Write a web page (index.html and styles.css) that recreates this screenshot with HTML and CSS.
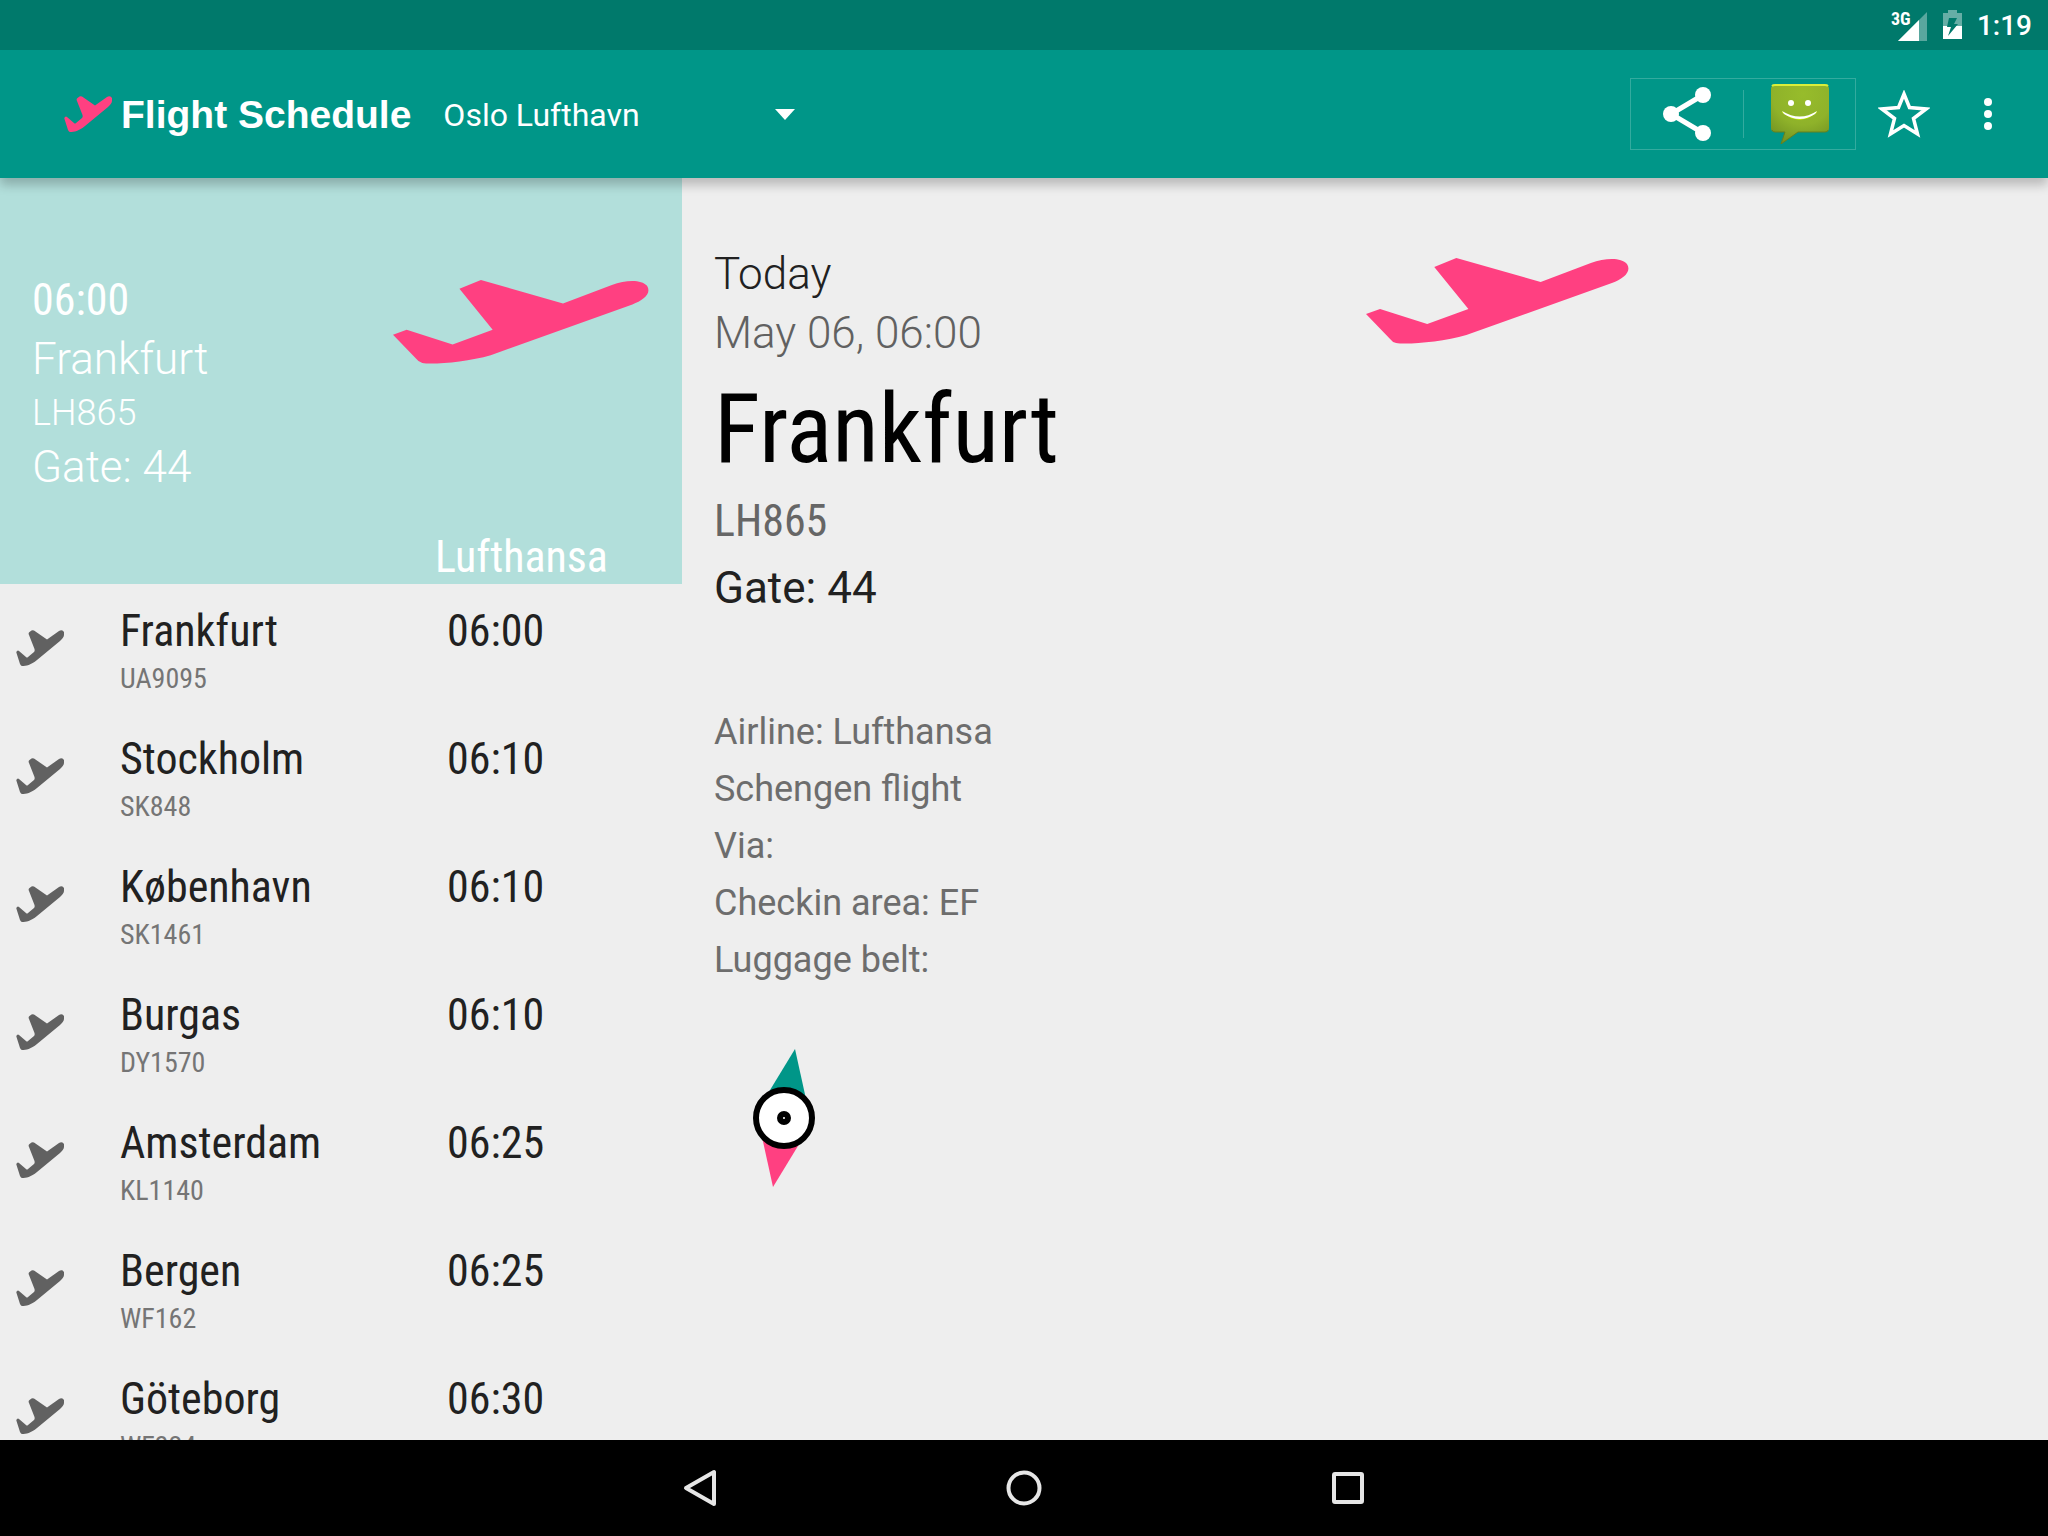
FILE: index.html
```html
<!DOCTYPE html>
<html lang="en">
<head>
<meta charset="utf-8">
<title>Flight Schedule</title>
<link rel="stylesheet" href="styles.css">
</head>
<body>
<svg width="0" height="0" class="defs" aria-hidden="true">
  <symbol id="plane" viewBox="0 0 262 86" preserveAspectRatio="none">
    <path d="M0 56 L14 51 L61 66 L102 51 L68 9 L90 0 L174 24 L224 5 C238 0 254 -1 260 6 C265 14 256 21 245 25 L100 77 C76 84 40 87 30 85 Q26 84 24 81 Z"/>
  </symbol>
  <symbol id="plane-small" viewBox="0 0 48 36">
    <path d="M1 21 Q2 20 3 21 L10 27 Q11 28 12 27 L18 22 Q19 21 18.500 19 L13 5 Q12 3 13.500 2 L15.500 .500 Q16.500 0 18 .500 L31 9.500 L43 1 C46 -1 49 1 48 5 C48 7 46 9 44 11 L21 30 C15 35 10 36 6 36 Q5 36 4 34 L.500 23 Q0 22 1 21 Z"/>
  </symbol>
</svg>

<header class="top">
  <div class="status">
    <svg class="signal" width="36" height="32" viewBox="0 0 36 32" role="img" aria-label="3G signal">
      <path d="M36 3 V32 H7 Z" fill="#fff" opacity=".35"/>
      <path d="M28 11 V32 H7 Z" fill="#fff"/>
      <text x="0" y="16" class="net">3G</text>
    </svg>
    <svg class="battery" width="20" height="30" viewBox="0 0 20 30" role="img" aria-label="Battery charging">
      <path d="M0 3 H5 V0 H14 V3 H19 V16 H0 Z" fill="#fff" opacity=".4"/>
      <path d="M0 16 H19 V29 H0 Z" fill="#fff"/>
      <path d="M6 8 H14 L11 14 H15 L5 26 L8 17 H4 Z" fill="#00796b"/>
    </svg>
    <time class="clock">1:19</time>
  </div>
  <div class="toolbar">
    <svg class="logo" width="48" height="36"><use href="#plane-small"/></svg>
    <h1 class="title">Flight Schedule</h1>
    <div class="airport">
      <select class="airport-select" aria-label="Airport">
        <option>Oslo Lufthavn</option>
      </select>
      <svg class="caret" width="20" height="11" viewBox="0 0 20 11"><path d="M0 0 H20 L10 11 Z" fill="#fff"/></svg>
    </div>
    <div class="actions">
      <div class="share-group">
        <button class="share-button" type="button" aria-label="Share">
          <svg width="48" height="54" viewBox="0 0 48 54" fill="#fff">
            <path d="M40 8 L8 27 L40 46" fill="none" stroke="#fff" stroke-width="5"/>
            <circle cx="40" cy="8" r="8"/><circle cx="8" cy="27" r="8"/><circle cx="40" cy="46" r="8"/>
          </svg>
        </button>
        <button class="share-button" type="button" aria-label="Messaging">
          <svg width="58" height="60" viewBox="0 0 58 60">
            <defs>
              <radialGradient id="bubble" cx=".55" cy=".15" r=".95">
                <stop offset="0" stop-color="#97bc2b"/><stop offset=".55" stop-color="#8fb22a"/><stop offset="1" stop-color="#6c8c20"/>
              </radialGradient>
            </defs>
            <path d="M4 1 H54 Q58 1 58 5 V44 Q58 48 54 48 H27 L10 60 L14 48 H4 Q0 48 0 44 V5 Q0 1 4 1 Z" fill="url(#bubble)"/>
            <path d="M1 2 Q2 1 4 1 H54 Q56 1 57 2" fill="none" stroke="#d9ee3a" stroke-width="2"/>
            <path d="M1 46 Q2 48 4 48 H14 L10 60 L27 48 H54 Q57 48 57 46" fill="none" stroke="#64801f"/>
            <circle cx="20" cy="19" r="3" fill="#fff"/><circle cx="37" cy="19" r="3" fill="#fff"/>
            <path d="M11 28 Q29 43 46 28" fill="none" stroke="#c4f000" stroke-width="1"/>
            <path d="M11 27 Q29 38 46 27 Q45 29 44 30 Q29 40 13 30 Z" fill="#fff"/>
          </svg>
        </button>
      </div>
      <button class="icon-button star" type="button" aria-label="Favourite">
        <svg width="52" height="48" viewBox="0 0 52 48">
          <path d="M26 4 L31.500 17.500 L48 19 L35.500 28.500 L39.500 44 L26 35.500 L12.500 44 L16.500 28.500 L4 19 L20.500 17.500 Z" fill="none" stroke="#fff" stroke-width="3.500"/>
        </svg>
      </button>
      <button class="icon-button more" type="button" aria-label="More options">
        <svg width="8" height="32" viewBox="0 0 8 32" fill="#fff"><circle cx="4" cy="4" r="4"/><circle cx="4" cy="16" r="4"/><circle cx="4" cy="28" r="4"/></svg>
      </button>
    </div>
  </div>
</header>

<main class="content">
  <section class="schedule">
    <div class="next">
      <div class="next-text">
        <p class="next-time">06:00</p>
        <p class="next-city">Frankfurt</p>
        <p class="next-code">LH865</p>
        <p class="next-gate">Gate: 44</p>
      </div>
      <svg class="next-plane" width="256" height="84"><use href="#plane"/></svg>
      <p class="next-airline">Lufthansa</p>
    </div>
    <ul class="flights">
      <li class="flight"><svg class="flight-icon" width="48" height="36"><use href="#plane-small"/></svg><div class="flight-name"><p class="city">Frankfurt</p><p class="code">UA9095</p></div><time class="flight-time">06:00</time></li>
      <li class="flight"><svg class="flight-icon" width="48" height="36"><use href="#plane-small"/></svg><div class="flight-name"><p class="city">Stockholm</p><p class="code">SK848</p></div><time class="flight-time">06:10</time></li>
      <li class="flight"><svg class="flight-icon" width="48" height="36"><use href="#plane-small"/></svg><div class="flight-name"><p class="city">København</p><p class="code">SK1461</p></div><time class="flight-time">06:10</time></li>
      <li class="flight"><svg class="flight-icon" width="48" height="36"><use href="#plane-small"/></svg><div class="flight-name"><p class="city">Burgas</p><p class="code">DY1570</p></div><time class="flight-time">06:10</time></li>
      <li class="flight"><svg class="flight-icon" width="48" height="36"><use href="#plane-small"/></svg><div class="flight-name"><p class="city">Amsterdam</p><p class="code">KL1140</p></div><time class="flight-time">06:25</time></li>
      <li class="flight"><svg class="flight-icon" width="48" height="36"><use href="#plane-small"/></svg><div class="flight-name"><p class="city">Bergen</p><p class="code">WF162</p></div><time class="flight-time">06:25</time></li>
      <li class="flight"><svg class="flight-icon" width="48" height="36"><use href="#plane-small"/></svg><div class="flight-name"><p class="city">Göteborg</p><p class="code">WF324</p></div><time class="flight-time">06:30</time></li>
    </ul>
  </section>

  <section class="detail">
    <div class="detail-text">
      <p class="day">Today</p>
      <p class="date">May 06, 06:00</p>
      <h2 class="destination">Frankfurt</h2>
      <p class="detail-code">LH865</p>
      <p class="detail-gate">Gate: 44</p>
      <div class="facts">
        <p>Airline: Lufthansa</p>
        <p>Schengen flight</p>
        <p>Via:</p>
        <p>Checkin area: EF</p>
        <p>Luggage belt:</p>
      </div>
      <svg class="compass" width="62" height="138" viewBox="0 0 62 138" role="img" aria-label="Compass">
        <path d="M42 0 L53 50 L14 46 Z" fill="#009688"/>
        <path d="M20 138 L9 88 L48 92 Z" fill="#ff4081"/>
        <circle cx="31" cy="69" r="28" fill="#fff" stroke="#000" stroke-width="6"/>
        <circle cx="31" cy="69" r="4" fill="#fff" stroke="#000" stroke-width="6"/>
      </svg>
    </div>
    <div class="detail-art">
      <svg class="detail-plane" width="263" height="86"><use href="#plane"/></svg>
    </div>
  </section>
</main>

<nav class="navbar" aria-label="System">
  <button class="nav-button" type="button" aria-label="Back"><svg width="34" height="38" viewBox="0 0 34 38"><path d="M31 3 V35 L3 19 Z" fill="none" stroke="#e6e6e6" stroke-width="4" stroke-linejoin="round"/></svg></button>
  <button class="nav-button" type="button" aria-label="Home"><svg width="36" height="36" viewBox="0 0 36 36"><circle cx="18" cy="18" r="15.500" fill="none" stroke="#e6e6e6" stroke-width="4"/></svg></button>
  <button class="nav-button" type="button" aria-label="Recent apps"><svg width="32" height="32" viewBox="0 0 32 32"><rect x="2" y="2" width="28" height="28" rx="1" fill="none" stroke="#e6e6e6" stroke-width="4"/></svg></button>
</nav>
</body>
</html>
```

FILE: styles.css
```css
* {
  box-sizing: border-box;
}

body {
  margin: 0;
  height: 100vh;
  display: flex;
  flex-direction: column;
  overflow: hidden;
  background: #eee;
  color: #212121;
  font-family: Roboto, "Noto Sans", sans-serif;
  font-size: 44px;
  line-height: 52px;
}

p,
h1,
h2 {
  margin: 0;
  font-weight: 400;
}

svg {
  display: block;
  flex: none;
}

.defs {
  position: absolute;
}

button {
  display: flex;
  align-items: center;
  justify-content: center;
  margin: 0;
  padding: 0;
  border: 0;
  background: none;
}

/* Status bar and app bar */
.top {
  flex: none;
  position: relative;
  background: #009688;
  color: #fff;
  box-shadow: 0 7px 10px rgba(0, 0, 0, .22);
}

.status {
  display: flex;
  justify-content: flex-end;
  align-items: center;
  height: 50px;
  padding-right: 16px;
  background: #00796b;
}

.signal {
  margin: 0 16px 0 0;
  height: 32px;
}

.net {
  font-size: 18px;
  font-weight: 700;
  font-family: "Roboto Condensed", Roboto, sans-serif;
  fill: #fff;
}

.battery {
  margin-right: 14px;
}

.clock {
  padding-top: 2px;
  font-size: 28px;
  font-weight: 500;
  line-height: 32px;
}

.toolbar {
  display: flex;
  align-items: center;
  height: 128px;
  padding: 0 24px 0 64px;
}

.logo {
  margin-right: 9px;
  fill: #ff4081;
}

.title {
  padding-top: 2px;
  font: 700 39px/48px "Liberation Sans", Arial, sans-serif;
}

.airport {
  display: flex;
  align-items: center;
  width: 384px;
  margin-left: 32px;
}

.airport-select {
  flex: 1;
  appearance: none;
  margin: 0;
  padding: 2px 0 0;
  border: 0;
  background: none;
  color: #fff;
  font: 400 32px/40px Roboto, sans-serif;
}

.caret {
  margin-right: 32px;
}

.actions {
  display: flex;
  align-items: center;
  margin-left: auto;
}

.share-group {
  display: flex;
  align-items: center;
  height: 72px;
  border: 1px solid rgba(255, 255, 255, .2);
}

.share-button {
  width: 112px;
  height: 48px;
}

.share-button + .share-button {
  border-left: 1px solid rgba(255, 255, 255, .2);
}

.star {
  width: 96px;
}

.more {
  width: 72px;
}

/* Two panes */
.content {
  flex: 1;
  min-height: 0;
  display: grid;
  grid-template-columns: 33.3% 1fr;
  overflow: hidden;
}

.next {
  display: grid;
  grid-template-columns: 1fr 256px;
  padding: 96px 33px 0 32px;
  height: 406px;
  background: #b2dfdb;
  color: #fff;
}

.next-text {
  grid-row: 1 / 3;
}

.next-time,
.next-airline,
.city,
.flight-time,
.destination,
.code,
.detail-code {
  font-family: "Roboto Condensed", Roboto, sans-serif;
}

.next-city,
.next-gate,
.next-code {
  font-weight: 300;
}

.next-city {
  margin-top: 7px;
}

.next-code {
  margin: 6px 0;
  font-size: 36px;
  line-height: 44px;
}

.next-plane {
  margin-top: 6px;
  fill: #ff4081;
}

.next-airline {
  align-self: end;
  padding: 0 0 1px 42px;
}

.flights {
  margin: 0;
  padding: 0;
  list-style: none;
}

.flight {
  display: grid;
  grid-template-columns: 104px 327px 1fr;
  height: 128px;
  padding: 21px 0 0 16px;
}

.flight-icon {
  margin-top: 25px;
  fill: #616161;
}

.code {
  font-size: 28px;
  line-height: 44px;
  color: #757575;
}

.detail {
  display: grid;
  grid-template-columns: 1fr 1fr;
}

.detail-text {
  padding: 70px 0 0 32px;
}

.day,
.date {
  font-weight: 300;
}

.date {
  margin-top: 7px;
  color: #616161;
}

.destination {
  margin-top: 14px;
  color: #000;
  font-size: 96px;
  line-height: 112px;
}

.detail-code {
  margin-top: 10px;
  color: #666;
}

.detail-gate {
  margin-top: 15px;
}

.facts {
  margin-top: 90px;
  color: #6d6d6d;
  font-size: 36px;
  line-height: 57px;
}

.compass {
  margin: 60px 0 0 39px;
}

.detail-plane {
  margin: 80px 0 0 1px;
  fill: #ff4081;
}

/* System navigation */
.navbar {
  flex: none;
  display: flex;
  justify-content: center;
  gap: 228px;
  height: 96px;
  background: #000;
}

.nav-button {
  width: 96px;
}
```
